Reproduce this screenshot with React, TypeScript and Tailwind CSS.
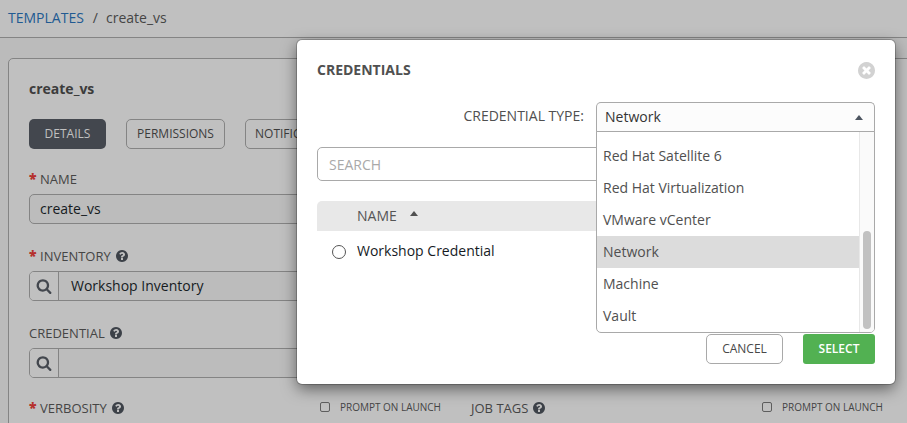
import React from "react";

const CIRCLE =
  "q0 209-103 385.5t-279.5 279.5-385.5 103-385.5-103-279.5-279.5-103-385.5 103-385.5 279.5-279.5 385.5-103 385.5 103 279.5 279.5 103 385.5z";

function SearchIcon() {
  return (
    <svg viewBox="0 0 1792 1792" className="h-4 w-4 fill-[#43474e]">
      <path d="M1216 832q0-185-131.5-316.5t-316.5-131.5-316.5 131.5-131.5 316.5 131.5 316.5 316.5 131.5 316.5-131.5 131.5-316.5zm512 832q0 52-38 90t-90 38q-54 0-90-38l-343-342q-179 124-399 124-143 0-273.5-55.5t-225-150-150-225-55.5-273.5 55.5-273.5 150-225 225-150 273.5-55.5 273.5 55.5 225 150 150 225 55.5 273.5q0 220-124 399l343 343q37 37 37 90z" />
    </svg>
  );
}

function HelpIcon() {
  return (
    <svg viewBox="128 128 1536 1536" className="ml-[5px] h-3 w-3 fill-[#3c4148]">
      <path
        d={
          "M1024 1376v-192q0-14-9-23t-23-9h-192q-14 0-23 9t-9 23v192q0 14 9 23t23 9h192q14 0 23-9t9-23zm256-672q0-88-55.5-163t-138.5-116-170-41q-243 0-371 213-15 24 8 42l132 100q7 6 19 6 16 0 25-12 53-68 86-92 34-24 86-24 48 0 85.5 26t37.5 59q0 38-20 61t-68 45q-63 28-115.5 86.5t-52.5 125.5v36q0 14 9 23t23 9h192q14 0 23-9t9-23q0-19 21.5-49.5t54.5-49.5q32-18 49-28.5t46-35 44.5-48 28-60.5 12.5-81zm384 192" +
          CIRCLE
        }
      />
    </svg>
  );
}

function CloseIcon() {
  return (
    <svg viewBox="128 128 1536 1536" className="h-[17px] w-[17px] fill-[#d2d2d2]">
      <path
        d={
          "M1277 1122q0-26-19-45l-181-181 181-181q19-19 19-45 0-27-19-46l-90-90q-19-19-46-19-26 0-45 19l-181 181-181-181q-19-19-45-19-27 0-46 19l-90 90q-19 19-19 46 0 26 19 45l181 181-181 181q-19 19-19 45 0 27 19 46l90 90q19 19 46 19 26 0 45-19l181-181 181 181q19 19 45 19 27 0 46-19l90-90q19-19 19-46zm387-226" +
          CIRCLE
        }
      />
    </svg>
  );
}

function Label({ text, required, help }: { text: string; required?: boolean; help?: boolean }) {
  return (
    <div className="flex h-5 items-center whitespace-nowrap text-[13px] leading-5 text-[#454545]">
      {required && <span className="w-[11px] text-[14px] font-extrabold text-[#b5302d]">*</span>}
      <span>{text}</span>
      {help && <HelpIcon />}
    </div>
  );
}

function Lookup({ value }: { value: string }) {
  return (
    <div className="mt-[5px] flex h-[30px] w-[412px] rounded-[5px] border border-[#848484] bg-[#bcbcbc] text-[14px] text-[#161b1f]">
      <div className="flex w-[29px] items-center justify-center rounded-l-[4px] border-r border-[#848484] bg-[#c0c0c0]">
        <SearchIcon />
      </div>
      <div className="flex items-center pb-px pl-3">{value}</div>
    </div>
  );
}

function Prompt() {
  return (
    <div className="flex items-center gap-[10px] pb-[2px] text-[10px] text-[#454545]">
      <span className="h-[10px] w-[10px] rounded-[2px] border border-[#5e5e5e]" />
      <span className="whitespace-nowrap">PROMPT ON LAUNCH</span>
    </div>
  );
}

function TemplatePage() {
  return (
    <>
      <header className="flex h-[38px] items-center border-b border-[#848484] bg-[#c0c0c0] pb-[3px] pl-2 text-[14px]">
        <span className="text-[#215a92]">TEMPLATES</span>
        <span className="pl-[9px] pr-2 text-[#454545]">/</span>
        <span className="text-[#454545]">create_vs</span>
      </header>
      <main className="ml-2 mt-5 h-[420px] w-[920px] rounded-[5px] border border-[#848484] bg-[#c0c0c0] pl-5 pt-5">
        <h1 className="h-5 text-[14px] font-bold leading-5 text-[#3c3c3c]">create_vs</h1>
        <nav className="mt-5 flex gap-5 text-[12px] text-[#3c3c3c]">
          <span className="flex h-[30px] w-[77px] items-center justify-center rounded-[5px] bg-[#43474e] text-[#c0c0c0]">DETAILS</span>
          <span className="flex h-[30px] w-[99px] items-center justify-center rounded-[5px] border border-[#848484]">PERMISSIONS</span>
          <span className="flex h-[30px] w-[108px] items-center justify-center rounded-[5px] border border-[#848484]">NOTIFICATIONS</span>
        </nav>
        <section className="pt-5">
          <Label text="NAME" required />
          <div className="mt-[5px] flex h-[30px] w-[412px] items-center rounded-[5px] border border-[#848484] bg-[#bcbcbc] pb-[2px] pl-[10px] text-[14px] text-[#161b1f]">
            create_vs
          </div>
        </section>
        <section className="pt-[22px]">
          <Label text="INVENTORY" required help />
          <Lookup value="Workshop Inventory" />
        </section>
        <section className="pt-[22px]">
          <Label text="CREDENTIAL" help />
          <Lookup value="" />
        </section>
        <div className="flex gap-[30px] pt-5">
          <div className="flex w-[412px] justify-between">
            <Label text="VERBOSITY" required help />
            <Prompt />
          </div>
          <div className="flex w-[412px] justify-between">
            <Label text="JOB TAGS" help />
            <Prompt />
          </div>
        </div>
      </main>
    </>
  );
}

const options = ["Red Hat Satellite 6", "Red Hat Virtualization", "VMware vCenter", "Network", "Machine", "Vault"];

function TypeSelect() {
  return (
    <div className="relative h-[31px] w-[279px] text-[14px]">
      <div className="flex h-[30px] items-center justify-between rounded-t-[5px] border border-b-0 border-[#a9a9a9] bg-[#fcfcfc] pl-2 pr-[11px] text-[#343434]">
        <span className="pb-[3px]">Network</span>
        <span className="h-0 w-0 border-x-4 border-b-[5px] border-x-transparent border-b-[#4d5560]" />
      </div>
      <div className="absolute left-0 top-[29px] flex h-[202px] w-[279px] overflow-hidden rounded-b-[5px] border border-[#a9a9a9] bg-white">
        <ul className="flex-1 pt-[8px] text-[#505050]">
          {options.map((name) => (
            <li key={name} className={`h-8 pl-[6px] leading-8 ${name === "Network" ? "bg-[#dcdcdc]" : ""}`}>
              {name}
            </li>
          ))}
        </ul>
        <div className="w-[15px] border-l border-[#e8e8e8] bg-[#fafafa] pl-[3px] pt-[99px]">
          <div className="h-[98px] w-2 rounded-full bg-[#c1c1c1]" />
        </div>
      </div>
    </div>
  );
}

function CredentialsDialog() {
  return (
    <div className="absolute left-[297px] top-10 flex h-[344px] w-[598px] flex-col rounded-[5px] bg-white px-5 shadow-[0_5px_15px_rgba(0,0,0,0.5),0_0_0_1px_rgba(0,0,0,0.2)]">
      <div className="mt-5 flex h-5 items-center justify-between">
        <h2 className="pb-[2px] text-[14px] font-bold text-[#505050]">CREDENTIALS</h2>
        <CloseIcon />
      </div>
      <div className="z-10 mt-[22px] flex h-[31px] items-center justify-end gap-3 text-[14px] text-[#505050]">
        <span className="-mt-1">CREDENTIAL TYPE:</span>
        <TypeSelect />
      </div>
      <div className="mt-[14px] flex h-[34px] items-center rounded-[5px] border border-[#a9a9a9] pl-[11px] text-[14px] text-[#a9a9a9]">SEARCH</div>
      <div className="mt-5 flex h-[30px] items-center rounded-t-[5px] bg-[#e8e8e8] pb-[2px] pl-10 text-[14px] text-[#555]">
        NAME
        <span className="-mt-[4px] ml-[13px] h-0 w-0 border-x-4 border-b-[5px] border-x-transparent border-b-[#505050]" />
      </div>
      <div className="flex h-10 items-center pl-[15px] text-[14px] text-[#161b1f]">
        <span className="mt-[2px] h-[14px] w-[14px] rounded-full border border-[#555]" />
        <span className="ml-[11px] pb-[2px]">Workshop Credential</span>
      </div>
      <div className="mt-auto flex justify-end gap-5 pb-5 text-[12px]">
        <button className="h-[30px] w-[77px] rounded-[5px] border border-[#a9a9a9] text-[#484848]">CANCEL</button>
        <button className="h-[30px] w-[72px] rounded-[3px] bg-[#52b152] font-semibold text-white">SELECT</button>
      </div>
    </div>
  );
}

export default function App() {
  return (
    <div className="relative h-[423px] w-[907px] overflow-hidden bg-[#bbbbbb] font-['Open_Sans',sans-serif]">
      <TemplatePage />
      <CredentialsDialog />
    </div>
  );
}
